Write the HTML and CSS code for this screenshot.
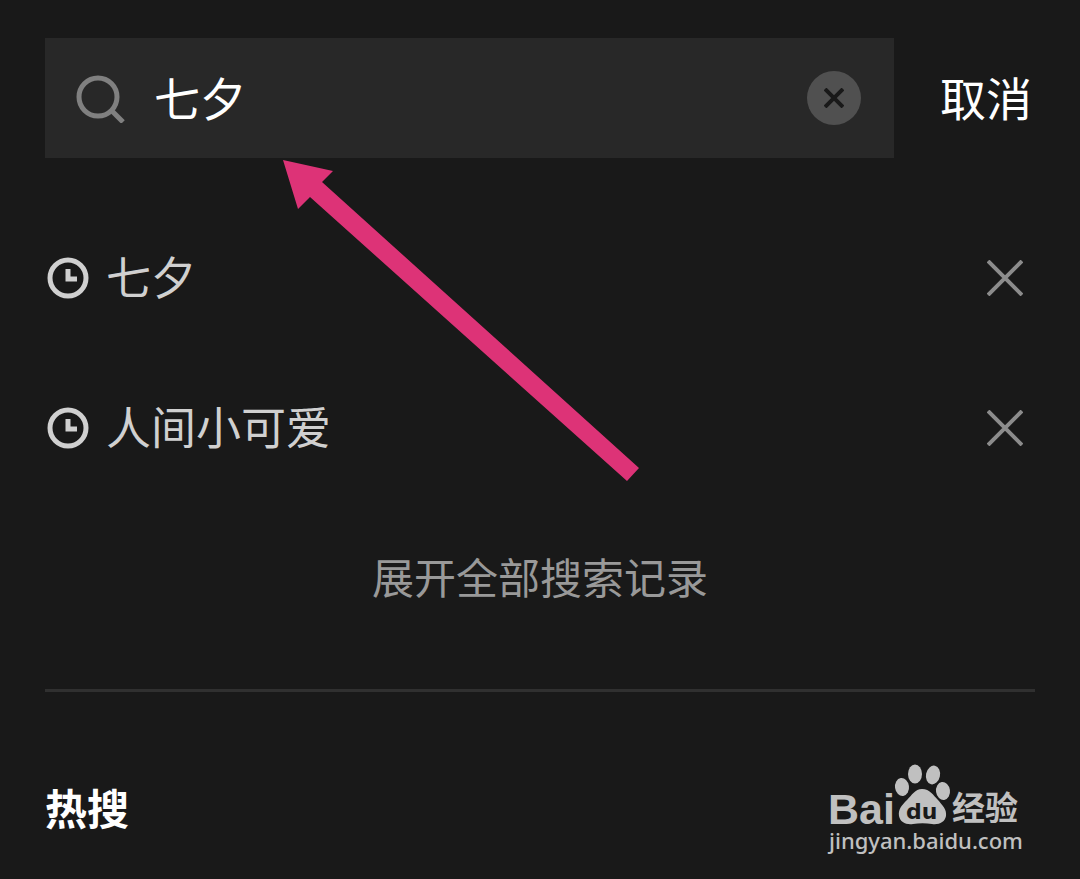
FILE: index.html
```html
<!DOCTYPE html>
<html lang="zh-CN">
<head>
	<meta charset="UTF-8">
	<meta name="viewport" content="width=device-width, initial-scale=1.0">
	<title>搜索</title>
	<link rel="stylesheet" href="styles.css">
</head>
<body>
	<div class="page">
		<form class="search-bar">
			<div class="search-box">
				<svg class="search-icon" viewBox="0 0 50 50" aria-hidden="true">
					<circle cx="23" cy="24" r="19"/>
					<path d="M36.5 37.5L48 49"/>
				</svg>
				<input type="text" value="七夕" aria-label="搜索">
				<button type="button" class="clear-btn" aria-label="清空">
					<svg viewBox="0 0 20 20"><path d="M1 1L19 19M19 1L1 19"/></svg>
				</button>
			</div>
			<button type="button" class="cancel-btn">取消</button>
		</form>

		<ul class="history">
			<li>
				<svg class="clock-icon" viewBox="0 0 42 42" aria-hidden="true">
					<circle cx="21" cy="21" r="18"/>
					<path d="M21 12V22H30"/>
				</svg>
				<a href="#">七夕</a>
				<button type="button" class="delete-btn" aria-label="删除 七夕">
					<svg viewBox="0 0 36 36"><path d="M1 1L35 35M35 1L1 35"/></svg>
				</button>
			</li>
			<li>
				<svg class="clock-icon" viewBox="0 0 42 42" aria-hidden="true">
					<circle cx="21" cy="21" r="18"/>
					<path d="M21 12V22H30"/>
				</svg>
				<a href="#">人间小可爱</a>
				<button type="button" class="delete-btn" aria-label="删除 人间小可爱">
					<svg viewBox="0 0 36 36"><path d="M1 1L35 35M35 1L1 35"/></svg>
				</button>
			</li>
		</ul>
		<button type="button" class="expand-btn">展开全部搜索记录</button>

		<div class="hot">
			<h2>热搜</h2>
			<svg class="watermark" viewBox="0 0 196 96">
				<g class="paw">
					<ellipse cx="75" cy="23" rx="7" ry="9" transform="rotate(-8 75 23)"/>
					<ellipse cx="88" cy="10" rx="7" ry="9.5"/>
					<ellipse cx="106" cy="11" rx="7" ry="9.5" transform="rotate(12 106 11)"/>
					<ellipse cx="116" cy="27" rx="7" ry="9" transform="rotate(-8 116 27)"/>
					<path d="M95 25C88 25 85 31 80 36C75 41 71 45 72 52C73 58 79 61 86 60C92 59 99 59 105 60C112 61 118 58 119 52C120 45 115 41 111 36C106 31 103 25 95 25Z"/>
				</g>
				<text class="wm-bai" x="1" y="60">Bai</text>
				<text class="wm-du" x="79" y="55">du</text>
				<text class="wm-name" x="125" y="56">经验</text>
				<text class="wm-url" x="2" y="85">jingyan.baidu.com</text>
			</svg>
		</div>

		<svg class="arrow" viewBox="0 0 356 321" aria-hidden="true">
			<path d="M0 0L50 11L39 22L356 308L344 321L27 37L15 49Z"/>
		</svg>
	</div>
</body>
</html>
```
FILE: styles.css
```css
* {
	margin: 0;
	padding: 0;
	box-sizing: border-box;
}

body {
	background-color: #191919;
	color: #fff;
	font-family: Roboto, 'Noto Sans CJK SC', sans-serif;
}

.page {
	position: relative;
	padding: 38px 45px 0;
}

button {
	background: none;
	border: none;
	color: inherit;
	font-family: inherit;
	cursor: pointer;
}

svg {
	display: block;
	fill: none;
}

/* 搜索栏 */
.search-bar {
	display: flex;
	align-items: center;
	gap: 46px;
	margin-bottom: 45px;
}

.search-box {
	flex: 1;
	min-width: 0;
	height: 120px;
	display: flex;
	align-items: center;
	padding: 0 33px 0 30px;
	background: #282828;
}

.search-icon {
	width: 50px;
	height: 50px;
	margin-right: 29px;
	stroke: #808080;
	stroke-width: 5;
}

.search-box input {
	flex: 1;
	min-width: 0;
	height: 80px;
	padding-bottom: 4px;
	background: none;
	border: none;
	outline: none;
	color: #fff;
	font-family: inherit;
	font-size: 46px;
}

.clear-btn {
	width: 54px;
	height: 54px;
	display: flex;
	align-items: center;
	justify-content: center;
	border-radius: 50%;
	background: #505050;
}

.clear-btn svg {
	width: 20px;
	height: 20px;
	stroke: #191919;
	stroke-width: 4;
}

.cancel-btn {
	width: 95px;
	padding-bottom: 4px;
	font-size: 46px;
	text-align: left;
}

/* 搜索记录 */
.history {
	list-style: none;
}

.history li {
	height: 150px;
	display: flex;
	align-items: center;
	padding: 0 12px 0 2px;
}

.clock-icon {
	width: 42px;
	height: 42px;
	margin-right: 17px;
	stroke: #d0d0d0;
	stroke-width: 5;
}

.history a {
	flex: 1;
	padding-bottom: 6px;
	color: #d0d0d0;
	font-size: 45px;
	text-decoration: none;
}

.delete-btn svg {
	width: 36px;
	height: 36px;
	stroke: #8c8c8c;
	stroke-width: 4;
}

.expand-btn {
	display: block;
	width: 100%;
	height: 150px;
	padding-bottom: 6px;
	color: #999;
	font-size: 42px;
}

/* 热搜 */
.hot {
	display: flex;
	justify-content: space-between;
	align-items: flex-start;
	margin-top: 36px;
	padding: 72px 12px 0 0;
	border-top: 3px solid #303030;
}

.hot h2 {
	font-size: 42px;
	line-height: 94px;
}

.watermark {
	width: 196px;
	height: 96px;
	fill: #c0c0c0;
}

.wm-bai {
	font: bold 43px 'Liberation Sans', sans-serif;
}

.wm-du {
	font: bold 22px 'DejaVu Sans', sans-serif;
	fill: #191919;
}

.wm-name {
	font: bold 33px 'Noto Sans CJK SC', sans-serif;
}

.wm-url {
	font: 500 22px 'Noto Sans', sans-serif;
}

.arrow {
	position: absolute;
	left: 283px;
	top: 160px;
	width: 356px;
	height: 321px;
	fill: #dd3377;
	pointer-events: none;
}
```
